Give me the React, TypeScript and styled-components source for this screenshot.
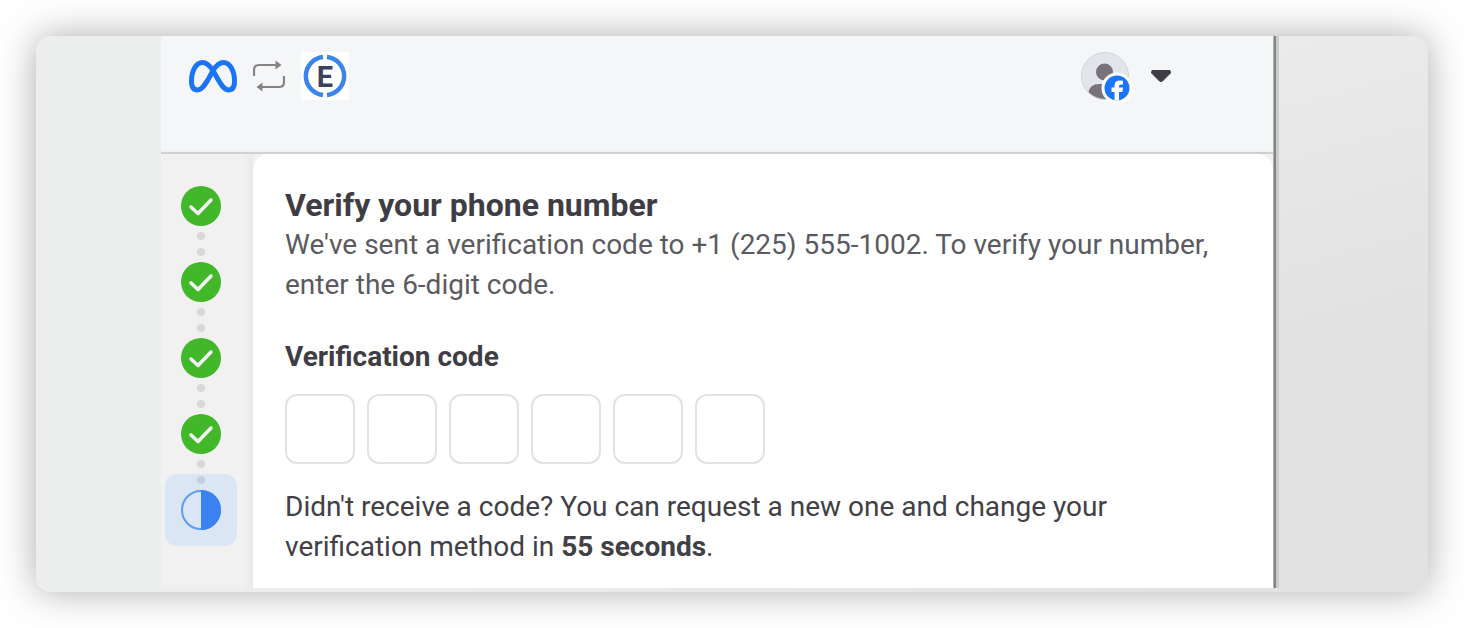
import React from "react";
import styled, { createGlobalStyle } from "styled-components";

const GlobalStyle = createGlobalStyle`
  * { box-sizing: border-box; }
  body {
    margin: 0;
    background: #fefefe;
    color: #3e3d44;
    font-family: Roboto, "Liberation Sans", sans-serif;
  }
`;

const Page = styled.main`
  padding: 36px;
`;

const Frame = styled.div`
  display: flex;
  padding-bottom: 4px;
  overflow: hidden;
  border-radius: 16px;
  background: linear-gradient(90deg, #ebeeed 0 30%, #e2e2e2 80%);
  box-shadow: 0 0 36px rgba(0, 0, 0, 0.32);
`;

const Backdrop = styled.div<{ $side: "left" | "right" }>`
  flex: none;
  width: ${(p) => (p.$side === "left" ? 125 : 149)}px;
  margin-bottom: -4px;
  background: ${(p) =>
    p.$side === "left" ? "#ebeeed" : "linear-gradient(165deg, #ebebeb, #e2e2e2 50%, #e1e1e1)"};
`;

const Dialog = styled.section`
  flex: 1;
  min-width: 0;
  background: #f1f1f1;
`;

const Edge = styled.div`
  flex: none;
  width: 6px;
  background: linear-gradient(90deg, #b0b0b0 0 1px, #858484 1px 3px, #c8cccb 3px 6px);
`;

const Header = styled.header`
  display: flex;
  justify-content: space-between;
  align-items: flex-start;
  height: 118px;
  padding: 16px 101px 0 28px;
  border-bottom: 2px solid #cfd1d1;
  background: linear-gradient(180deg, #f4f6f8 0 112px, #eef0f1 116px);
`;

const Brands = styled.div`
  display: flex;
  align-items: center;
  gap: 16px;
`;

const Partner = styled.svg`
  background: #fff;
`;

const AccountButton = styled.button`
  display: flex;
  align-items: center;
  gap: 17px;
  padding: 0;
  border: 0;
  background: none;
  cursor: pointer;
`;

const Body = styled.div`
  display: flex;
`;

const Steps = styled.ol`
  display: flex;
  flex: none;
  flex-direction: column;
  align-items: center;
  isolation: isolate;
  width: 92px;
  margin: 0;
  padding: 32px 12px 0 0;
  list-style: none;
  background: linear-gradient(90deg, #f1f1f1 0 82px, #e7eae9 92px);
`;

const Step = styled.li<{ $current?: boolean }>`
  position: relative;
  display: flex;
  flex-direction: column;
  align-items: center;

  &::before {
    content: "";
    display: ${(p) => (p.$current ? "block" : "none")};
    position: absolute;
    z-index: -1;
    inset: -16px;
    border-radius: 12px;
    background: #dae6f4;
  }
`;

const StepIcon = styled.svg`
  display: block;
`;

const Dots = styled.span`
  display: flex;
  flex-direction: column;
  gap: 8px;
  padding: 6px 0;

  &::before,
  &::after {
    content: "";
    width: 8px;
    height: 8px;
    border-radius: 50%;
    background: rgba(30, 45, 40, 0.12);
  }
`;

const Card = styled.form`
  flex: 1;
  min-width: 0;
  padding: 31px 32px 21px;
  border-radius: 16px 16px 0 0;
  background: #fff;
`;

const Title = styled.h1`
  margin: 0;
  font-size: 32px;
  font-weight: 700;
  line-height: 40px;
`;

const Text = styled.p<{ $muted?: boolean }>`
  margin: 0;
  color: ${(p) => (p.$muted ? "#5b5a60" : "#414046")};
  font-size: 28px;
  line-height: 40px;
`;

const CodeField = styled.fieldset`
  margin: 32px 0 23px;
  padding: 0;
  border: 0;
`;

const Legend = styled.legend`
  margin-bottom: 17px;
  padding: 0;
  font-size: 28px;
  font-weight: 700;
  line-height: 40px;
`;

const Digits = styled.div`
  display: flex;
  gap: 12px;
`;

const Digit = styled.input`
  width: 70px;
  height: 70px;
  padding: 0;
  border: 2px solid #e2e2e3;
  border-radius: 12px;
  background: #fff;
  color: inherit;
  font: inherit;
  font-size: 28px;
  text-align: center;
`;

const MetaLogo = () => (
  <svg width="48" height="36" viewBox="0 -1 48 36" fill="none" stroke="#1b74f5" strokeWidth="5" role="img" aria-label="Meta">
    <path d="M24 11.500C21 7 18 3.500 13.500 3.500C7 3.500 2.500 12 2.500 22C2.500 28 4.500 31 8.500 31C13 31 16.500 25 20 19L24 11.500C27.500 6 30.500 3.500 34.500 3.500C41 3.500 45.500 12 45.500 22C45.500 28 43.500 31 39.500 31C35.500 31 32.500 26.500 28.500 19.500Z" />
  </svg>
);

const SwapIcon = () => (
  <svg width="32" height="32" viewBox="0 0 32 32" aria-hidden="true">
    <path d="M1 16V10Q1 5 6 5H25M31 16V22Q31 27 26 27H7" fill="none" stroke="#858284" strokeWidth="2.200" />
    <path d="M22.500 0.500L28.500 5L22.500 9.500ZM9.500 22.500L3.500 27L9.500 31.500Z" fill="#858284" />
  </svg>
);

const PartnerLogo = () => (
  <Partner width="48" height="48" viewBox="0 0 48 48" role="img" aria-label="Partner">
    <path d="M22 5A19.100 19.100 0 0 0 22 43M26 5A19.100 19.100 0 0 1 26 43" fill="none" stroke="#3a84ec" strokeWidth="4.500" />
    <text x="24" y="35" textAnchor="middle" fontFamily="Roboto, sans-serif" fontSize="29" fontWeight="700" fill="#3c4257">
      E
    </text>
  </Partner>
);

const Avatar = () => (
  <svg width="52" height="52" viewBox="0 0 52 52" aria-hidden="true">
    <defs>
      <clipPath id="face">
        <circle cx="24" cy="24" r="23" />
      </clipPath>
    </defs>
    <circle cx="24" cy="24" r="23.500" fill="#e2e6eb" stroke="#d3d5d4" />
    <g clipPath="url(#face)" fill="#78727a">
      <circle cx="23.500" cy="20" r="8.500" />
      <path d="M7 48V41Q9 32 18 32H32Q41 34 41 48Z" />
    </g>
    <circle cx="36" cy="36" r="15.500" fill="#fff" />
    <circle cx="36" cy="36" r="12.500" fill="#1a75f8" />
    <path d="M33.500 48.500V40H30.500V35.500H33.500V33.500Q33.500 28.500 39 28.500Q41 28.500 42 28.800V32.500H40.200Q38 32.500 38 34V35.500H42L41.300 40H38V48.500Z" fill="#fff" />
  </svg>
);

const Caret = () => (
  <svg width="22" height="18" viewBox="0 0 22 18" aria-hidden="true">
    <path d="M2 1.500H20L20.500 4L12.500 12Q11 13 9.500 12L1.500 4Z" fill="#3e3d45" stroke="#3e3d45" strokeLinejoin="round" />
  </svg>
);

const DoneIcon = () => (
  <StepIcon width="40" height="40" viewBox="0 0 40 40" role="img" aria-label="Completed">
    <circle cx="20" cy="20" r="20" fill="#42b72a" />
    <path d="M10 21L17 27.500L30 14" fill="none" stroke="#f1f1f1" strokeWidth="3.600" strokeLinecap="round" strokeLinejoin="round" />
  </StepIcon>
);

const CurrentIcon = () => (
  <StepIcon width="40" height="40" viewBox="0 0 40 40" role="img" aria-label="In progress">
    <circle cx="20" cy="20" r="19" fill="none" stroke="#5c9af4" strokeWidth="2" />
    <path d="M20 0A20 20 0 0 1 20 40Z" fill="#3b82f0" />
  </StepIcon>
);

export default function App() {
  return (
    <>
      <GlobalStyle />
      <Page>
        <Frame>
          <Backdrop $side="left" />
          <Dialog>
            <Header>
              <Brands>
                <MetaLogo />
                <SwapIcon />
                <PartnerLogo />
              </Brands>
              <AccountButton type="button" aria-label="Account menu">
                <Avatar />
                <Caret />
              </AccountButton>
            </Header>
            <Body>
              <Steps>
                {[1, 2, 3, 4].map((step) => (
                  <Step key={step}>
                    <DoneIcon />
                    <Dots />
                  </Step>
                ))}
                <Step $current aria-current="step">
                  <CurrentIcon />
                </Step>
              </Steps>
              <Card>
                <Title>Verify your phone number</Title>
                <Text $muted>
                  We've sent a verification code to +1 (225) 555-1002. To verify your number, enter the 6-digit code.
                </Text>
                <CodeField>
                  <Legend>Verification code</Legend>
                  <Digits>
                    {[1, 2, 3, 4, 5, 6].map((digit) => (
                      <Digit key={digit} type="text" inputMode="numeric" maxLength={1} aria-label={`Digit ${digit}`} />
                    ))}
                  </Digits>
                </CodeField>
                <Text>
                  Didn't receive a code? You can request a new one and change your verification method in{" "}
                  <strong>55 seconds</strong>.
                </Text>
              </Card>
            </Body>
          </Dialog>
          <Edge />
          <Backdrop $side="right" />
        </Frame>
      </Page>
    </>
  );
}
